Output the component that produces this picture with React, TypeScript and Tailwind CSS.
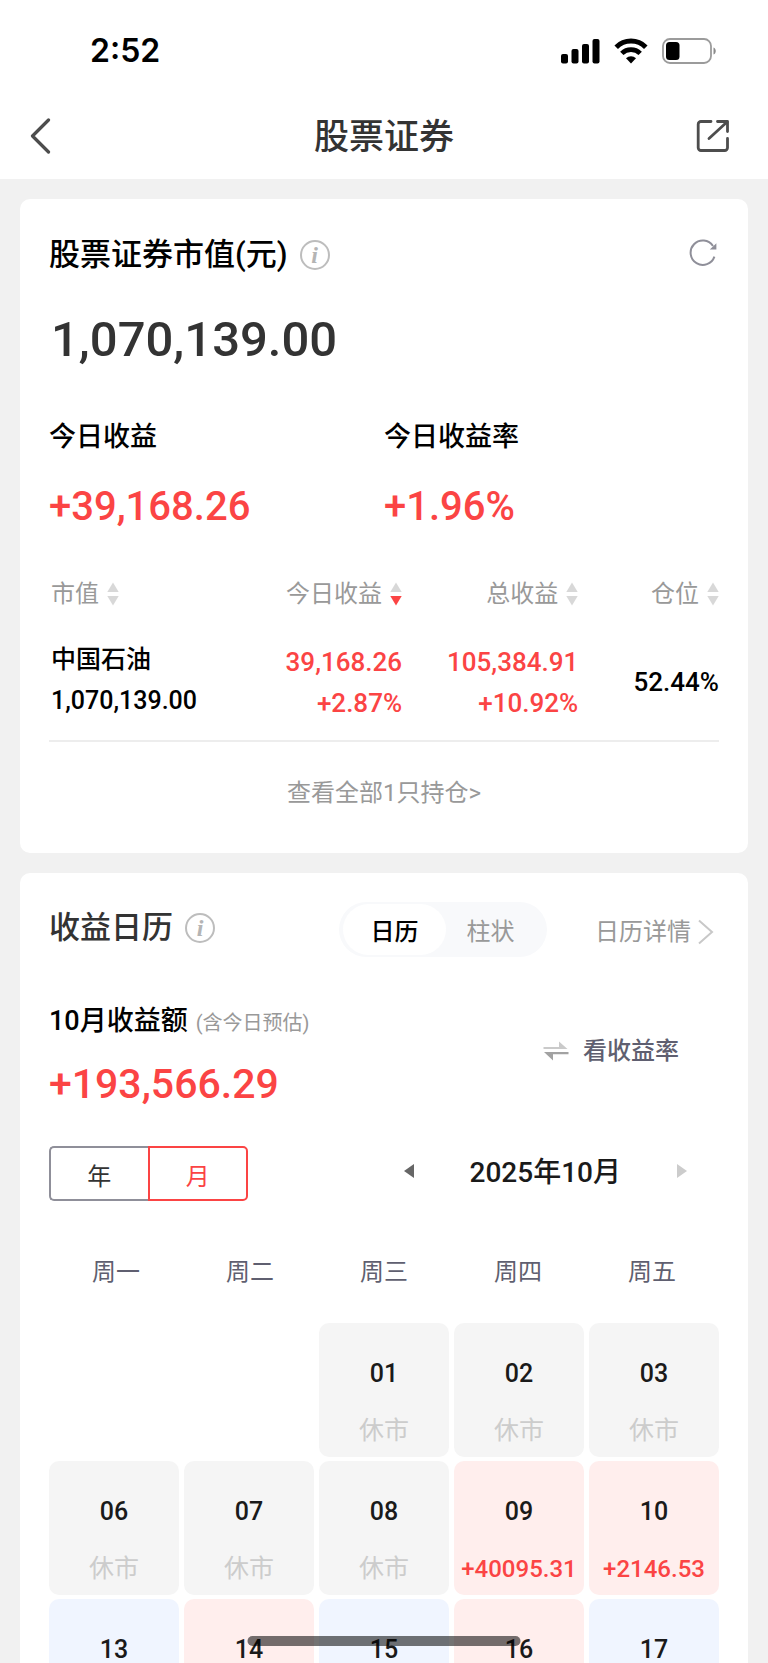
import React, { useState } from "react";
import clsx from "clsx";

type SortKey = "value" | "today" | "total" | "position";

const columns: { key: SortKey; label: string; className: string }[] = [
  { key: "value", label: "市值", className: "w-[27%] pl-[2px]" },
  { key: "today", label: "今日收益", className: "w-[26%] pr-[2px]" },
  { key: "total", label: "总收益", className: "w-[26%]" },
  { key: "position", label: "仓位", className: "w-[21%]" },
];

const weekdays = ["周一", "周二", "周三", "周四", "周五"];

type Day = { date: string; kind: "closed" | "up" | "down"; text?: string };

const days: (Day | null)[] = [
  null,
  null,
  { date: "01", kind: "closed", text: "休市" },
  { date: "02", kind: "closed", text: "休市" },
  { date: "03", kind: "closed", text: "休市" },
  { date: "06", kind: "closed", text: "休市" },
  { date: "07", kind: "closed", text: "休市" },
  { date: "08", kind: "closed", text: "休市" },
  { date: "09", kind: "up", text: "+40095.31" },
  { date: "10", kind: "up", text: "+2146.53" },
  { date: "13", kind: "down" },
  { date: "14", kind: "up" },
  { date: "15", kind: "down" },
  { date: "16", kind: "up" },
  { date: "17", kind: "down" },
];

function StatusBar() {
  return (
    <div className="flex h-[94px] items-center justify-between pt-2 pl-[90px] pr-[52px]">
      <span className="font-['Inter'] text-[32px] leading-10 font-semibold text-black">2:52</span>
      <div className="flex items-center gap-[14px] text-black">
        {/* Signal */}
        <svg width="39" height="26" viewBox="0 0 39 26" fill="currentColor">
          <rect x="0" y="16" width="7" height="9.5" rx="2" />
          <rect x="10.5" y="11" width="7" height="14.5" rx="2" />
          <rect x="21" y="6" width="7" height="19.5" rx="2" />
          <rect x="31.5" y="1" width="7" height="24.5" rx="2" />
        </svg>
        {/* Wifi */}
        <svg width="34" height="26" viewBox="0 0 34 26" fill="none">
          <path d="M2.2 9.2A21 21 0 0 1 31.8 9.2" stroke="currentColor" strokeWidth="5" />
          <path d="M7.8 15.4A13.2 13.2 0 0 1 26.2 15.4" stroke="currentColor" strokeWidth="4.8" />
          <path d="M17 25.5L12 20.3A7.2 7.2 0 0 1 22 20.3Z" fill="currentColor" />
        </svg>
        {/* Battery */}
        <svg width="54" height="26" viewBox="0 0 54 26" fill="none">
          <rect x="1" y="1" width="48" height="24" rx="7" stroke="#9b9b9b" strokeWidth="1.8" />
          <rect x="4" y="4" width="13.5" height="18" rx="3.5" fill="currentColor" />
          <path d="M51.5 9.5c3 1 3 6 0 7z" fill="#8b8b8b" />
        </svg>
      </div>
    </div>
  );
}

function InfoButton({ label }: { label: string }) {
  return (
    <button
      aria-label={label}
      className="flex h-[30px] w-[30px] items-center justify-center rounded-full border-2 border-[#bdbdbd] font-['Liberation_Serif'] text-[24px] leading-6 font-bold text-[#b4b4b4] italic"
    >
      i
    </button>
  );
}

function SortIcon({ active }: { active: boolean }) {
  return (
    <svg width="12" height="24" viewBox="0 0 12 24">
      <path d="M6 0.5L11.7 10H0.3Z" fill="#d8d8d8" />
      <path d="M6 23.5L11.7 14H0.3Z" fill={active ? "#fb4444" : "#d8d8d8"} />
    </svg>
  );
}

function HoldingsCard() {
  const [sortKey, setSortKey] = useState<SortKey>("today");

  return (
    <section className="rounded-[10px] bg-white px-[29px] pt-9 pb-11">
      <div className="flex items-center justify-between">
        <div className="flex items-center gap-3">
          <h2 className="text-[31px] leading-10 font-medium text-black">股票证券市值(元)</h2>
          <InfoButton label="市值说明" />
        </div>
        <button aria-label="刷新" className="mr-[2px] pb-1">
          <svg width="28" height="28" viewBox="0 0 28 28" fill="none">
            <path d="M25.4 17.6A12.2 12.2 0 1 1 24 7" stroke="#8f8f99" strokeWidth="2" />
            <path d="M27.4 4.2V10.6H20.8Z" fill="#8f8f99" />
          </svg>
        </button>
      </div>

      <p className="mt-[37px] pl-[2px] text-[49px] leading-[56px] font-medium text-[#333]">1,070,139.00</p>

      {/* Today */}
      <dl className="mt-[51px] grid grid-cols-2">
        <div>
          <dt className="text-[27px] leading-9 font-medium text-black">今日收益</dt>
          <dd className="mt-7 text-[40px] leading-[48px] font-medium text-[#fb4444]">+39,168.26</dd>
        </div>
        <div>
          <dt className="text-[27px] leading-9 font-medium text-black">今日收益率</dt>
          <dd className="mt-7 text-[40px] leading-[48px] font-medium text-[#fb4444]">+1.96%</dd>
        </div>
      </dl>

      {/* Holdings */}
      <div className="mt-[47px] border-b-2 border-[#ededed] pb-[13px]">
        <table className="w-full table-fixed">
          <thead>
            <tr>
              {columns.map((col) => (
                <th key={col.key} className={clsx("font-normal", col.className)}>
                  <button
                    onClick={() => setSortKey(col.key)}
                    className={clsx(
                      "flex w-full items-center gap-2 text-[24px] leading-8 whitespace-nowrap text-[#999]",
                      col.key === "value" ? "justify-start" : "justify-end"
                    )}
                  >
                    {col.label}
                    <SortIcon active={sortKey === col.key} />
                  </button>
                </th>
              ))}
            </tr>
          </thead>
          <tbody>
            <tr className="h-[117px] align-bottom text-right font-medium">
              <td className="pb-[6px] pl-[2px] text-left text-[25px] leading-[41px] text-black">
                <div>中国石油</div>
                <div>1,070,139.00</div>
              </td>
              <td className="pr-[2px] pb-[3px] text-[26px] leading-[41px] text-[#fb4444]">
                <div>39,168.26</div>
                <div>+2.87%</div>
              </td>
              <td className="pb-[3px] text-[26px] leading-[41px] text-[#fb4444]">
                <div>105,384.91</div>
                <div>+10.92%</div>
              </td>
              <td className="pb-6 text-[26px] leading-[41px] text-black">52.44%</td>
            </tr>
          </tbody>
        </table>
      </div>

      <a href="#holdings" className="mt-[35px] block text-center text-[24px] leading-8 text-[#999]">
        查看全部1只持仓&gt;
      </a>
    </section>
  );
}

function CalendarCard() {
  const [view, setView] = useState<"calendar" | "bar">("calendar");
  const [range, setRange] = useState<"year" | "month">("month");

  return (
    <section className="rounded-[10px] bg-white px-[29px] pt-[29px] pb-8">
      <div className="flex items-center">
        <div className="flex items-center gap-3 pb-1">
          <h2 className="text-[31px] leading-10 font-medium text-[#333]">收益日历</h2>
          <InfoButton label="日历说明" />
        </div>
        <div className="ml-auto flex h-[55px] w-[208px] rounded-full bg-[#f8f9fb] px-1 py-[2px] text-[24px] leading-8">
          <button
            onClick={() => setView("calendar")}
            className={clsx(
              "w-[103px] rounded-full pt-1",
              view === "calendar" ? "bg-white font-medium text-black" : "text-[#999]"
            )}
          >
            日历
          </button>
          <button
            onClick={() => setView("bar")}
            className={clsx(
              "flex-1 rounded-full pt-1 pr-2",
              view === "bar" ? "bg-white font-medium text-black" : "text-[#999]"
            )}
          >
            柱状
          </button>
        </div>
        <a href="#calendar" className="mr-[5px] ml-12 flex items-center gap-[6px] pt-1 text-[24px] leading-8 text-[#999]">
          日历详情
          <svg width="17" height="26" viewBox="0 0 17 26" fill="none">
            <path d="M2 1.5L15 13L2 24.5" stroke="#c8c8c8" strokeWidth="2" />
          </svg>
        </a>
      </div>

      <div className="mt-[46px] flex items-center justify-between">
        <div>
          <h3 className="flex items-baseline gap-2 text-[27px] leading-9 font-medium text-black">
            10月收益额
            <small className="text-[20px] font-normal text-[#999]">(含今日预估)</small>
          </h3>
          <p className="mt-[19px] text-[41px] leading-[48px] font-medium text-[#fb4444]">+193,566.29</p>
        </div>
        <button className="mr-10 flex items-center gap-[14px] pb-[10px] text-[24px] leading-8 font-medium text-[#5f5f70]">
          <svg width="26" height="20" viewBox="0 0 26 20">
            <path d="M0.5 6H16V0.5L24.5 8H0.5Z" fill="#cacaca" />
            <path d="M25.5 11H1L10 19.5V13.2H25.5Z" fill="#a2a2a2" />
          </svg>
          看收益率
        </button>
      </div>

      <div className="mt-[38px] flex items-center justify-between">
        <div className="flex h-[55px] w-[199px] text-[24px] leading-8">
          <button
            onClick={() => setRange("year")}
            className={clsx(
              "flex-1 rounded-l-[5px] border-2 pt-[6px]",
              range === "year" ? "border-[#fb4444] text-[#fb4444]" : "border-r-0 border-[#8f8f99] text-[#333]"
            )}
          >
            年
          </button>
          <button
            onClick={() => setRange("month")}
            className={clsx(
              "flex-1 rounded-r-[5px] border-2 pt-[6px]",
              range === "month" ? "border-[#fb4444] text-[#fb4444]" : "border-l-0 border-[#8f8f99] text-[#333]"
            )}
          >
            月
          </button>
        </div>
        <div className="mr-8 flex items-center gap-14 pb-[2px]">
          <button aria-label="上个月" className="pb-1">
            <svg width="10" height="14" viewBox="0 0 10 14">
              <path d="M10 0V14L0 7Z" fill="#666" />
            </svg>
          </button>
          <span className="text-[28px] leading-9 font-medium text-[#1a1a1a]">2025年10月</span>
          <button aria-label="下个月" className="pb-1">
            <svg width="10" height="14" viewBox="0 0 10 14">
              <path d="M0 0V14L10 7Z" fill="#ccc" />
            </svg>
          </button>
        </div>
      </div>

      {/* Calendar */}
      <div className="mt-[55px] grid grid-cols-5 text-center text-[24px] leading-8 text-[#5f5f70]">
        {weekdays.map((name) => (
          <span key={name}>{name}</span>
        ))}
      </div>
      <div className="mt-[35px] grid grid-cols-5 gap-x-[5px] gap-y-1 text-center leading-8">
        {days.map((day, i) =>
          day ? (
            <div
              key={day.date}
              className={clsx(
                "min-h-[134px] rounded-[10px] pt-[35px] pb-[10px]",
                day.kind === "closed" && "bg-[#f5f5f5]",
                day.kind === "up" && "bg-[#ffeeed]",
                day.kind === "down" && "bg-[#f0f5ff]"
              )}
            >
              <div className="text-[25px] font-medium text-[#1a1a1a]">{day.date}</div>
              {day.text && (
                <div
                  className={clsx(
                    "mt-[25px]",
                    day.kind === "closed" ? "text-[25px] text-[#ccc]" : "text-[24px] font-medium text-[#fb4444]"
                  )}
                >
                  {day.text}
                </div>
              )}
            </div>
          ) : (
            <div key={i} />
          )
        )}
      </div>
    </section>
  );
}

export default function App() {
  return (
    <div className="relative h-screen overflow-hidden bg-[#f1f1f1] font-['Roboto','Noto_Sans_CJK_SC',sans-serif]">
      <header className="bg-white">
        <StatusBar />
        <div className="flex h-[85px] items-center justify-between pr-[38px] pl-[30px] text-[#4d4d4d]">
          <button aria-label="返回" className="w-[42px] pb-[2px]">
            <svg width="21" height="36" viewBox="0 0 21 36" fill="none">
              <path d="M18.5 2L2.5 18L18.5 34" stroke="currentColor" strokeWidth="3.2" strokeLinecap="round" strokeLinejoin="round" />
            </svg>
          </button>
          <h1 className="pt-[2px] text-[35px] leading-[48px] font-medium text-[#333]">股票证券</h1>
          <button aria-label="分享" className="pb-[2px]">
            <svg
              width="34"
              height="34"
              viewBox="0 0 34 34"
              fill="none"
              stroke="currentColor"
              strokeWidth="2.8"
              strokeLinecap="round"
              strokeLinejoin="round"
            >
              <path d="M15 2.5H5A2.8 2.8 0 0 0 2.2 5.3V28.7A2.8 2.8 0 0 0 5 31.5H28.7A2.8 2.8 0 0 0 31.5 28.7V19.5" />
              <path d="M21.5 2.5H31.5V12.5" />
              <path d="M31 3L13 19.5" />
            </svg>
          </button>
        </div>
      </header>

      <main className="space-y-5 px-5 pt-5">
        <HoldingsCard />
        <CalendarCard />
      </main>

      {/* Home indicator */}
      <div className="absolute bottom-[17px] left-1/2 h-[10px] w-[273px] -translate-x-1/2 rounded-full bg-black/55" />
    </div>
  );
}
